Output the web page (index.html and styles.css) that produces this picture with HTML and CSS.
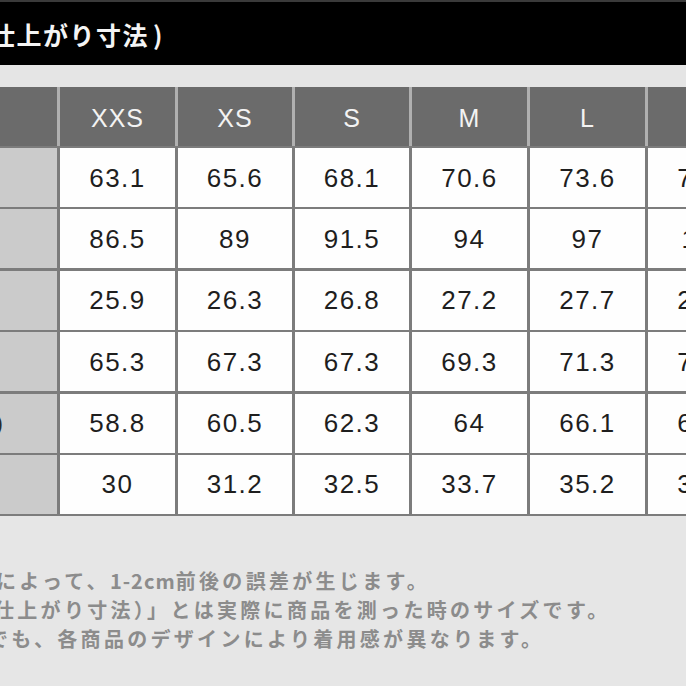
FILE: index.html
```html
<!DOCTYPE html>
<html lang="ja">
<head>
<meta charset="utf-8">
<title>仕上がり寸法</title>
<link rel="stylesheet" href="styles.css">
</head>
<body>
<div class="page">
  <div class="titlebar"><span class="title">仕上がり寸法<span class="paren">)</span></span></div>
  <div class="band"></div>
  <div class="table">
    <div class="thead">
      <div class="hcell"></div>
      <div class="hcell">XXS</div>
      <div class="hcell">XS</div>
      <div class="hcell">S</div>
      <div class="hcell">M</div>
      <div class="hcell">L</div>
      <div class="hcell">XL</div>
    </div>
    <div class="tbody">
      <div class="label"></div>
      <div class="cell">63.1</div><div class="cell">65.6</div><div class="cell">68.1</div><div class="cell">70.6</div><div class="cell">73.6</div><div class="cell">76.6</div>
      <div class="label"></div>
      <div class="cell">86.5</div><div class="cell">89</div><div class="cell">91.5</div><div class="cell">94</div><div class="cell">97</div><div class="cell">100</div>
      <div class="label"></div>
      <div class="cell">25.9</div><div class="cell">26.3</div><div class="cell">26.8</div><div class="cell">27.2</div><div class="cell">27.7</div><div class="cell">28.2</div>
      <div class="label"></div>
      <div class="cell">65.3</div><div class="cell">67.3</div><div class="cell">67.3</div><div class="cell">69.3</div><div class="cell">71.3</div><div class="cell">73.3</div>
      <div class="label"><span class="cut">)</span></div>
      <div class="cell">58.8</div><div class="cell">60.5</div><div class="cell">62.3</div><div class="cell">64</div><div class="cell">66.1</div><div class="cell">68.2</div>
      <div class="label"></div>
      <div class="cell">30</div><div class="cell">31.2</div><div class="cell">32.5</div><div class="cell">33.7</div><div class="cell">35.2</div><div class="cell">36.7</div>
    </div>
  </div>
  <div class="notes">
    <p class="note n1">によって、<span class="latin">1-2cm</span>前後の誤差が生じます。</p>
    <p class="note n2">仕上がり寸法）」とは実際に商品を測った時のサイズです。</p>
    <p class="note n3">でも、各商品のデザインにより着用感が異なります。</p>
  </div>
</div>
</body>
</html>
```

FILE: styles.css
```css
html, body {
  margin: 0;
  padding: 0;
  background: #e6e6e6;
}
.page {
  width: 686px;
  height: 686px;
  overflow: hidden;
  background: #e6e6e6;
}
.titlebar {
  height: 63px;
  border-top: 2px solid #3a3a3a;
  background: #000;
  display: flex;
  align-items: center;
  white-space: nowrap;
}
.title {
  margin-left: -10px;
  margin-top: 0;
  color: #f4f4f4;
  font-family: "Noto Sans CJK JP", "Noto Sans", sans-serif;
  font-weight: 700;
  font-size: 25px;
  letter-spacing: 1.5px;
}
.paren {
  margin-left: 4px;
}
.band {
  height: 22px;
  background: #e5e5e5;
}
.table {
  width: 763px;
  display: flex;
  flex-direction: column;
  font-family: "Liberation Sans", Arial, sans-serif;
}
.thead {
  display: grid;
  grid-template-columns: 57px 115px 114px 114px 115px 115px 115px;
  column-gap: 3px;
  background: #b0b0b0;
  height: 59px;
}
.hcell {
  background: #6b6b6b;
  color: #f3f3f3;
  font-size: 25px;
  letter-spacing: 1px;
  display: flex;
  align-items: center;
  justify-content: center;
  padding-top: 3px;
}
.tbody {
  display: grid;
  grid-template-columns: 57px 115px 114px 114px 115px 115px 115px;
  grid-auto-rows: 59px;
  column-gap: 3px;
  row-gap: 2.4px;
  padding: 2px 0;
  background: #7c7c7c;
}
.label {
  background: #cbcbcb;
  display: flex;
  align-items: center;
  overflow: hidden;
}
.cut {
  margin-left: -5px;
  color: #2a2a2a;
  font-size: 24px;
}
.cell {
  background: #fefefe;
  color: #1e1e1e;
  font-size: 26px;
  letter-spacing: 1.5px;
  display: flex;
  align-items: center;
  justify-content: center;
  padding-top: 1px;
}
.notes {
  padding-top: 50px;
  font-family: "Noto Sans CJK JP", "Noto Sans", sans-serif;
  font-weight: 700;
  font-size: 20px;
  letter-spacing: 3.3px;
  line-height: 29px;
  color: #8c8c8c;
  white-space: nowrap;
}
.note {
  margin: 0;
}
.latin {
  letter-spacing: 1px;
}
.n1 { text-indent: -4px; }
.n2 { text-indent: -6px; }
.n3 { text-indent: -12px; }
```
